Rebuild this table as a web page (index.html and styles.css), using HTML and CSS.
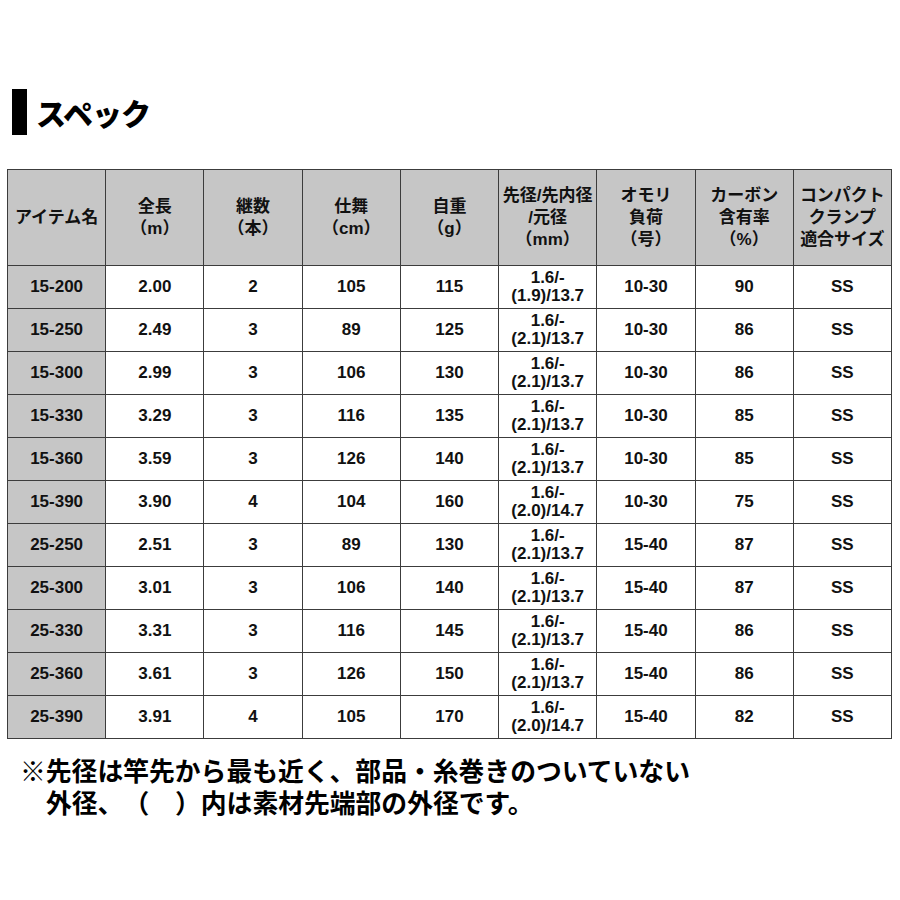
FILE: index.html
```html
<!DOCTYPE html>
<html lang="ja">
<head>
<meta charset="utf-8">
<title>スペック</title>
<link rel="stylesheet" href="styles.css">
</head>
<body>
<div class="page">
  <h1 class="title"><span class="bar"></span><span class="title-text">スペック</span></h1>
  <table class="spec">
    <thead>
      <tr>
        <th class="name">アイテム名</th>
        <th>全長<br>（m）</th>
        <th>継数<br>（本）</th>
        <th>仕舞<br>（cm）</th>
        <th>自重<br>（g）</th>
        <th>先径/先内径<br>/元径<br>（mm）</th>
        <th>オモリ<br>負荷<br>（号）</th>
        <th>カーボン<br>含有率<br>（%）</th>
        <th>コンパクト<br>クランプ<br>適合サイズ</th>
      </tr>
    </thead>
    <tbody>
      <tr><td class="name">15-200</td><td>2.00</td><td>2</td><td>105</td><td>115</td><td class="two">1.6/-<br>(1.9)/13.7</td><td>10-30</td><td>90</td><td>SS</td></tr>
      <tr><td class="name">15-250</td><td>2.49</td><td>3</td><td>89</td><td>125</td><td class="two">1.6/-<br>(2.1)/13.7</td><td>10-30</td><td>86</td><td>SS</td></tr>
      <tr><td class="name">15-300</td><td>2.99</td><td>3</td><td>106</td><td>130</td><td class="two">1.6/-<br>(2.1)/13.7</td><td>10-30</td><td>86</td><td>SS</td></tr>
      <tr><td class="name">15-330</td><td>3.29</td><td>3</td><td>116</td><td>135</td><td class="two">1.6/-<br>(2.1)/13.7</td><td>10-30</td><td>85</td><td>SS</td></tr>
      <tr><td class="name">15-360</td><td>3.59</td><td>3</td><td>126</td><td>140</td><td class="two">1.6/-<br>(2.1)/13.7</td><td>10-30</td><td>85</td><td>SS</td></tr>
      <tr><td class="name">15-390</td><td>3.90</td><td>4</td><td>104</td><td>160</td><td class="two">1.6/-<br>(2.0)/14.7</td><td>10-30</td><td>75</td><td>SS</td></tr>
      <tr><td class="name">25-250</td><td>2.51</td><td>3</td><td>89</td><td>130</td><td class="two">1.6/-<br>(2.1)/13.7</td><td>15-40</td><td>87</td><td>SS</td></tr>
      <tr><td class="name">25-300</td><td>3.01</td><td>3</td><td>106</td><td>140</td><td class="two">1.6/-<br>(2.1)/13.7</td><td>15-40</td><td>87</td><td>SS</td></tr>
      <tr><td class="name">25-330</td><td>3.31</td><td>3</td><td>116</td><td>145</td><td class="two">1.6/-<br>(2.1)/13.7</td><td>15-40</td><td>86</td><td>SS</td></tr>
      <tr><td class="name">25-360</td><td>3.61</td><td>3</td><td>126</td><td>150</td><td class="two">1.6/-<br>(2.1)/13.7</td><td>15-40</td><td>86</td><td>SS</td></tr>
      <tr><td class="name">25-390</td><td>3.91</td><td>4</td><td>105</td><td>170</td><td class="two">1.6/-<br>(2.0)/14.7</td><td>15-40</td><td>82</td><td>SS</td></tr>
    </tbody>
  </table>
  <div class="note">
    <p class="note-line">※先径は竿先から最も近く、部品・糸巻きのついていない</p>
    <p class="note-line indent">外径、（　）内は素材先端部の外径です。</p>
  </div>
</div>
</body>
</html>
```

FILE: styles.css
```css
html, body {
  margin: 0;
  padding: 0;
  background: #ffffff;
}

body {
  font-family: "Liberation Sans", "Noto Sans CJK JP", sans-serif;
  color: #111111;
  text-spacing-trim: space-all;
}

.page {
  width: 900px;
  padding-top: 89px;
}

.title {
  display: flex;
  align-items: center;
  gap: 9px;
  margin: 0 0 34px 12px;
  height: 46px;
  font-size: 30px;
  font-weight: 700;
  line-height: 46px;
}

.bar {
  display: block;
  width: 15px;
  height: 46px;
  background: #000000;
}

.title-text {
  font-family: "Noto Sans CJK JP", sans-serif;
  font-weight: 900;
  letter-spacing: -1px;
  color: #000000;
}

.spec {
  margin-left: 7px;
  width: 885px;
  border-collapse: collapse;
  table-layout: fixed;
  font-size: 17px;
  font-weight: 700;
}

.spec th,
.spec td {
  border: 1px solid #3c3c3c;
  text-align: center;
  vertical-align: middle;
  padding: 0;
}

.spec th {
  background: #c6c6c6;
  height: 95px;
  line-height: 22px;
  font-weight: 700;
}

.spec td {
  height: 42px;
  line-height: 18px;
  background: #ffffff;
}

.spec td.name {
  background: #c6c6c6;
}

.spec td.two {
  line-height: 18px;
}

.note {
  margin-top: 15px;
  padding-left: 20px;
  font-family: "Noto Sans CJK JP", sans-serif;
  font-size: 25.8px;
  font-weight: 700;
  line-height: 32px;
  color: #000000;
  text-spacing-trim: space-all;
}

.note-line {
  margin: 0;
  white-space: nowrap;
}

.indent {
  padding-left: 26px;
}
```
